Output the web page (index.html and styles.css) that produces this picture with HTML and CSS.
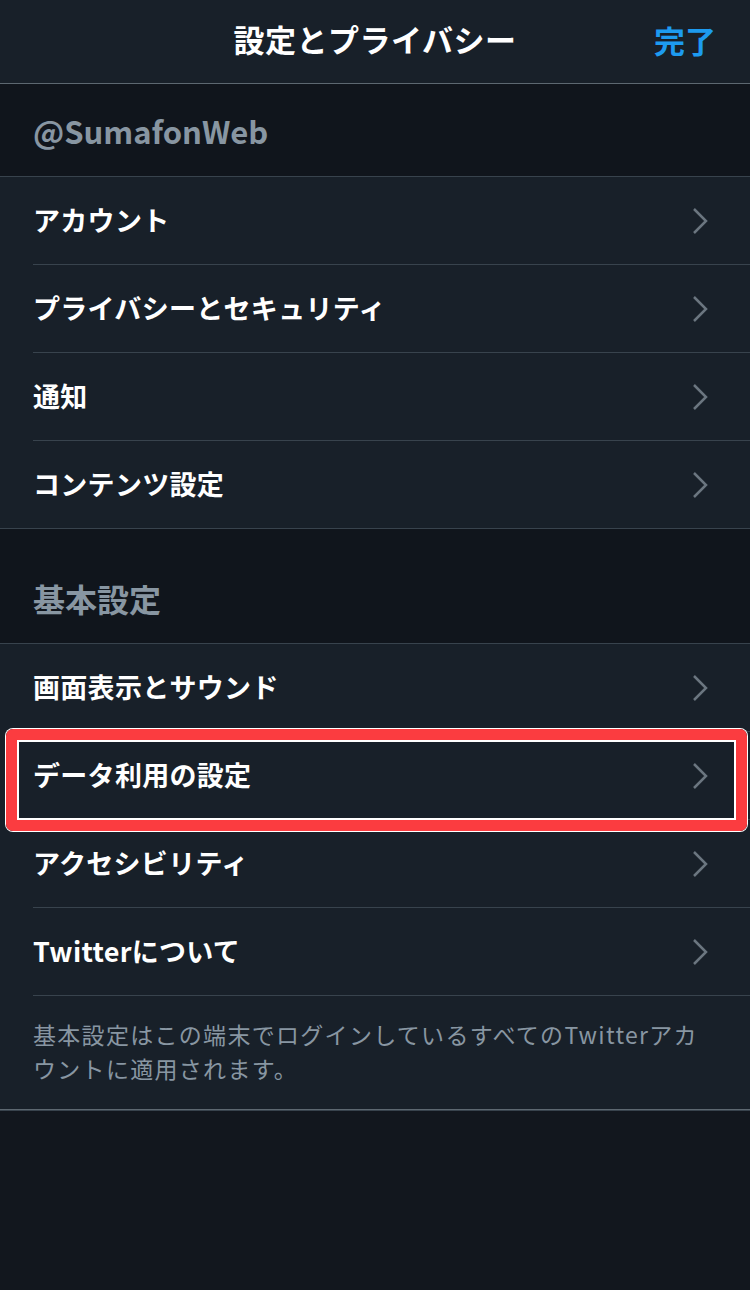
FILE: index.html
```html
<!DOCTYPE html>
<html lang="ja">
<head>
<meta charset="UTF-8">
<title>設定とプライバシー</title>
<link rel="stylesheet" href="styles.css">
</head>
<body>
<header class="nav">
  <h1 class="nav-title">設定とプライバシー</h1>
  <span class="nav-done">完了</span>
</header>

<div class="section-head account">@SumafonWeb</div>
<ul class="list">
  <li class="item"><div class="row"><span class="label">アカウント</span><svg class="chev" viewBox="0 0 16 28"><polyline points="2,2 14,14 2,26"/></svg></div></li>
  <li class="item"><div class="row"><span class="label">プライバシーとセキュリティ</span><svg class="chev" viewBox="0 0 16 28"><polyline points="2,2 14,14 2,26"/></svg></div></li>
  <li class="item"><div class="row"><span class="label">通知</span><svg class="chev" viewBox="0 0 16 28"><polyline points="2,2 14,14 2,26"/></svg></div></li>
  <li class="item"><div class="row"><span class="label">コンテンツ設定</span><svg class="chev" viewBox="0 0 16 28"><polyline points="2,2 14,14 2,26"/></svg></div></li>
</ul>

<div class="section-head general">基本設定</div>
<ul class="list">
  <li class="item"><div class="row"><span class="label">画面表示とサウンド</span><svg class="chev" viewBox="0 0 16 28"><polyline points="2,2 14,14 2,26"/></svg></div></li>
  <li class="item marked"><div class="row"><span class="label">データ利用の設定</span><svg class="chev" viewBox="0 0 16 28"><polyline points="2,2 14,14 2,26"/></svg></div><span class="highlight"></span></li>
  <li class="item"><div class="row"><span class="label">アクセシビリティ</span><svg class="chev" viewBox="0 0 16 28"><polyline points="2,2 14,14 2,26"/></svg></div></li>
  <li class="item"><div class="row"><span class="label">Twitterについて</span><svg class="chev" viewBox="0 0 16 28"><polyline points="2,2 14,14 2,26"/></svg></div></li>
  <li class="note">基本設定はこの端末でログインしているすべてのTwitterアカウントに適用されます。</li>
</ul>
</body>
</html>
```

FILE: styles.css
```css
html, body { background: #12171e; }
body {
  margin: 0;
  font-family: "Noto Sans CJK JP", "Noto Sans", sans-serif;
  color: #fff;
}

.nav {
  height: 84px;
  display: flex;
  align-items: center;
  justify-content: center;
  position: relative;
  background: #182029;
  border-bottom: 1px solid #5d6871;
  padding-bottom: 7px;
  box-sizing: border-box;
}
.nav-title {
  margin: 0;
  font-size: 31px;
  font-weight: 700;
  letter-spacing: 0.5px;
}
.nav-done {
  position: absolute;
  right: 34px;
  top: 17px;
  font-size: 31px;
  font-weight: 700;
  color: #1d9bf0;
}

.section-head {
  background: #10151c;
  color: #8896a2;
  font-weight: 700;
  padding-left: 33px;
  display: flex;
  align-items: center;
  border-bottom: 1px solid #38434d;
}
.account { height: 92px; font-size: 31px; border-top: 1px solid #5d6871; margin-top: -1px; }
.general { height: 115px; font-size: 32px; padding-top: 24px; box-sizing: border-box; }

.list {
  list-style: none;
  margin: 0;
  padding: 0;
  background: #182029;
  border-bottom: 1px solid #38434d;
}
.item {
  padding-left: 33px;
  position: relative;
}
.row {
  height: 87px;
  display: flex;
  align-items: center;
  justify-content: space-between;
  padding-right: 42px;
  border-bottom: 1px solid #38434d;
}
.list:first-of-type .item:last-child .row { border-bottom: none; }
.label {
  font-size: 27px;
  font-weight: 700;
  letter-spacing: 0.3px;
  margin-top: -3px;
}
.chev {
  width: 16px;
  height: 28px;
  fill: none;
  stroke: #6b7680;
  stroke-width: 2.5;
}

.highlight {
  position: absolute;
  left: 6px;
  right: 3px;
  top: -3px;
  bottom: -11px;
  border: 11px solid #fb3c40;
  border-radius: 7px;
  box-shadow: 0 0 0 1px #fff, inset 0 0 0 2px #fff;
}

.note {
  padding: 21px 48px 20px 33px;
  font-size: 23px;
  line-height: 34px;
  letter-spacing: 1.3px;
  color: #8896a2;
  height: 114px;
  box-sizing: border-box;
  border-bottom: 1px solid #5d6871;
}
```
